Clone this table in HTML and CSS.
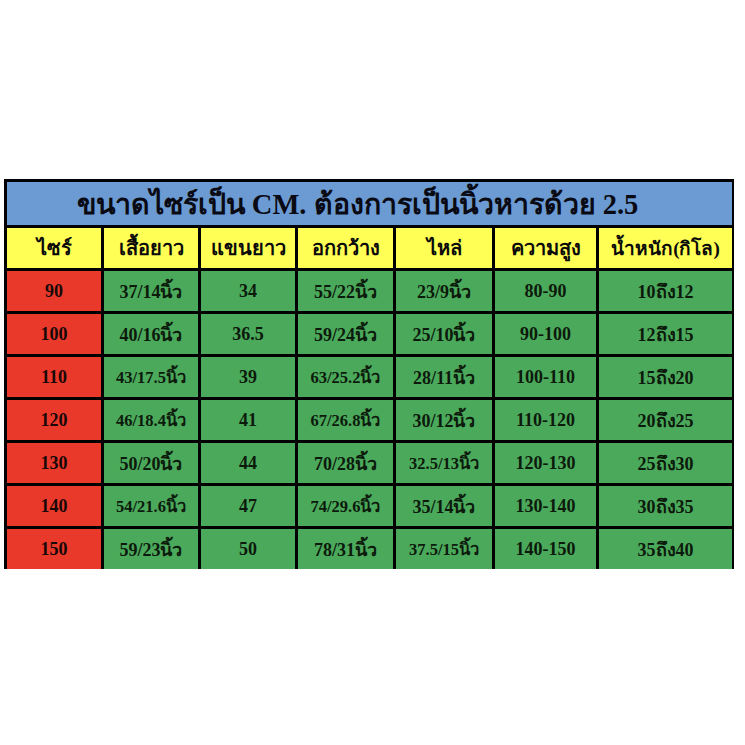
FILE: index.html
```html
<!DOCTYPE html>
<html lang="th">
<head>
<meta charset="utf-8">
<title>ขนาดไซร์</title>
<link rel="stylesheet" href="styles.css">
</head>
<body>
<div class="chart">
  <div class="title">ขนาดไซร์เป็น CM. ต้องการเป็นนิ้วหารด้วย 2.5</div>
  <div class="hd">ไซร์</div><div class="hd">เสื้อยาว</div><div class="hd">แขนยาว</div><div class="hd">อกกว้าง</div><div class="hd">ไหล่</div><div class="hd">ความสูง</div><div class="hd hd-last">น้ำหนัก(กิโล)</div>

  <div class="sz">90</div><div class="c">37/14นิ้ว</div><div class="c">34</div><div class="c">55/22นิ้ว</div><div class="c">23/9นิ้ว</div><div class="c">80-90</div><div class="c">10ถึง12</div>
  <div class="sz">100</div><div class="c">40/16นิ้ว</div><div class="c">36.5</div><div class="c">59/24นิ้ว</div><div class="c">25/10นิ้ว</div><div class="c">90-100</div><div class="c">12ถึง15</div>
  <div class="sz">110</div><div class="c sm">43/17.5นิ้ว</div><div class="c">39</div><div class="c sm">63/25.2นิ้ว</div><div class="c">28/11นิ้ว</div><div class="c">100-110</div><div class="c">15ถึง20</div>
  <div class="sz">120</div><div class="c sm">46/18.4นิ้ว</div><div class="c">41</div><div class="c sm">67/26.8นิ้ว</div><div class="c">30/12นิ้ว</div><div class="c">110-120</div><div class="c">20ถึง25</div>
  <div class="sz">130</div><div class="c">50/20นิ้ว</div><div class="c">44</div><div class="c">70/28นิ้ว</div><div class="c sm">32.5/13นิ้ว</div><div class="c">120-130</div><div class="c">25ถึง30</div>
  <div class="sz">140</div><div class="c sm">54/21.6นิ้ว</div><div class="c">47</div><div class="c sm">74/29.6นิ้ว</div><div class="c">35/14นิ้ว</div><div class="c">130-140</div><div class="c">30ถึง35</div>
  <div class="sz">150</div><div class="c">59/23นิ้ว</div><div class="c">50</div><div class="c">78/31นิ้ว</div><div class="c sm">37.5/15นิ้ว</div><div class="c">140-150</div><div class="c">35ถึง40</div>
</div>
</body>
</html>
```

FILE: styles.css
```css
html, body {
  margin: 0;
  padding: 0;
  background: #ffffff;
}

body {
  padding: 179px 0 0 4px;
  font-family: "Liberation Serif", "Noto Sans", "DejaVu Sans", serif;
  font-weight: bold;
  color: #111111;
}

.chart {
  width: 730px;
  box-sizing: border-box;
  display: grid;
  grid-template-columns: 94px 94px 94px 95px 96px 101px 133px;
  grid-template-rows: 43px 40px repeat(7, 40px);
  gap: 3px;
  padding: 3px 2px 0 3px;
  background: #000000;
}

.chart > div {
  display: flex;
  align-items: center;
  justify-content: center;
  white-space: nowrap;
  overflow: hidden;
}

.title {
  grid-column: 1 / -1;
  background: #6b9bd2;
  font-size: 28.5px;
  padding-right: 24px;
  color: #0a0a14;
}

.hd {
  background: #ffff55;
  font-size: 20px;
  color: #0a0a0a;
}

.hd-last {
  justify-content: flex-start;
  font-size: 19px;
}

.sz {
  background: #e9392b;
  font-size: 18px;
  color: #1a0808;
}

.c {
  background: #4ba95b;
  font-size: 18px;
  color: #0c1a0c;
}

.c.sm {
  font-size: 16.5px;
}
```
